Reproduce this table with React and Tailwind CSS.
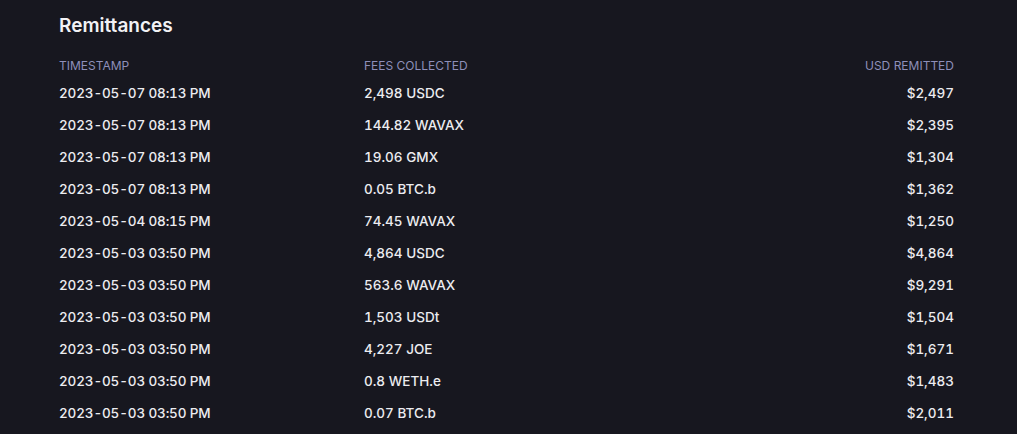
const rows = [
  ["2023-05-07 08:13 PM", "2,498 USDC", "$2,497"],
  ["2023-05-07 08:13 PM", "144.82 WAVAX", "$2,395"],
  ["2023-05-07 08:13 PM", "19.06 GMX", "$1,304"],
  ["2023-05-07 08:13 PM", "0.05 BTC.b", "$1,362"],
  ["2023-05-04 08:15 PM", "74.45 WAVAX", "$1,250"],
  ["2023-05-03 03:50 PM", "4,864 USDC", "$4,864"],
  ["2023-05-03 03:50 PM", "563.6 WAVAX", "$9,291"],
  ["2023-05-03 03:50 PM", "1,503 USDt", "$1,504"],
  ["2023-05-03 03:50 PM", "4,227 JOE", "$1,671"],
  ["2023-05-03 03:50 PM", "0.8 WETH.e", "$1,483"],
  ["2023-05-03 03:50 PM", "0.07 BTC.b", "$2,011"],
];

const App = () => {
  return (
    <div className="min-h-screen bg-[#17171f] font-['Inter',sans-serif] pl-[59px] pr-[63px] pt-[14px]">
      <h2 className="text-[19px] leading-[24px] font-semibold text-[#f2f2f5]">Remittances</h2>

      <table className="w-full mt-[18px] border-collapse">
        <thead>
          <tr className="text-[12px] uppercase text-[#8e8fba] h-[21px]">
            <th className="w-[305px] text-left font-normal p-0 align-top pt-[1px]">Timestamp</th>
            <th className="text-left font-normal p-0 align-top pt-[1px]">Fees Collected</th>
            <th className="text-right font-normal p-0 align-top pt-[1px]">USD Remitted</th>
          </tr>
        </thead>
        <tbody className="text-[13.5px] font-medium tabular-nums text-[#ececf0]">
          {rows.map((row, i) => (
            <tr key={i} className="h-[32px]">
              <td className="p-0 tracking-[-0.15px]">{row[0]}</td>
              <td className="p-0">{row[1]}</td>
              <td className="p-0 text-right">{row[2]}</td>
            </tr>
          ))}
        </tbody>
      </table>
    </div>
  );
};

export default App;
